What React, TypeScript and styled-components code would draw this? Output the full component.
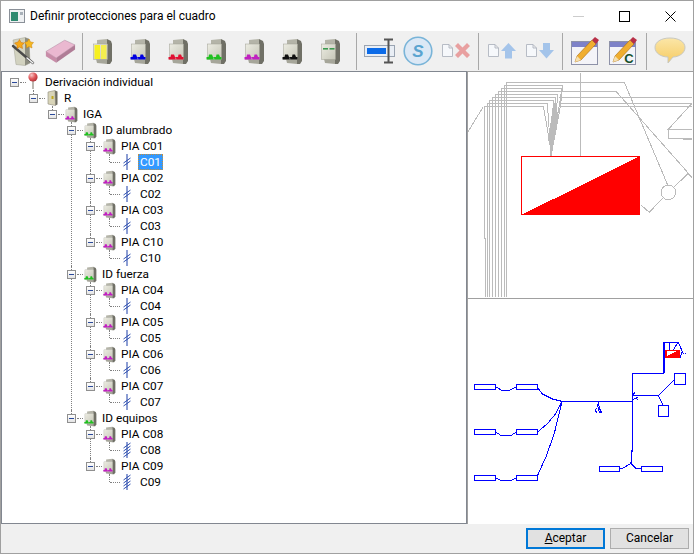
import React, { useId } from 'react';
import styled, { createGlobalStyle } from 'styled-components';

const GlobalStyle = createGlobalStyle`
  html, body {
    margin: 0;
    padding: 0;
    background: #f0f0f0;
  }
  * {
    box-sizing: border-box;
  }
`

const UI_FONT = `Roboto, "Liberation Sans", sans-serif`

const Window = styled.div`
  width: 694px;
  height: 554px;
  display: flex;
  flex-direction: column;
  border: 1px solid #a0a0a0;
  background: #f0f0f0;
  font-family: ${UI_FONT};
  font-size: 11.8px;
  color: #000;
  overflow: hidden;
`

const TitleBar = styled.div`
  height: 30px;
  flex: none;
  display: flex;
  align-items: center;
  background: #fff;
  padding-left: 8px;
`

const TitleText = styled.span`
  margin-left: 5px;
  flex: 1;
  font-size: 12px;
  line-height: 17px;
  padding-top: 1px;
`

const WinButton = styled.div`
  width: 46px;
  height: 30px;
  display: flex;
  align-items: center;
  justify-content: center;
`

const Toolbar = styled.div`
  height: 40px;
  flex: none;
  display: flex;
  align-items: center;
  padding-left: 2px;
  background: #f0f0f0;
`

const ToolButton = styled.div`
  width: 38px;
  height: 38px;
  flex: none;
  display: flex;
  align-items: center;
  justify-content: center;
`

const ToolSep = styled.div<{ $before: number; $after: number }>`
  width: 1px;
  height: 37px;
  flex: none;
  background: #a8a8a8;
  margin: 0 ${p => p.$after}px 0 ${p => p.$before}px;
`

const Main = styled.div`
  flex: 1;
  min-height: 0;
  display: flex;
`

const TreePanel = styled.div`
  width: 466px;
  flex: none;
  background: #fff;
  border: 1px solid #828790;
  padding-top: 2px;
  overflow: hidden;
`

const SidePanel = styled.div`
  flex: 1;
  display: flex;
  flex-direction: column;
  min-width: 0;
`

const Preview = styled.div<{ $h: number }>`
  height: ${p => p.$h}px;
  flex: none;
  background: #fff;
  border-top: 1px solid #a0a0a0;
  border-left: 1px solid #a0a0a0;
  overflow: hidden;

  svg {
    display: block;
  }
`

const Footer = styled.div`
  height: 29px;
  flex: none;
  display: flex;
  align-items: center;
  justify-content: flex-end;
  gap: 5px;
  padding: 0 4px 1px 0;
  background: #f0f0f0;
`

const DialogButton = styled.button<{ $primary?: boolean }>`
  height: 21px;
  width: 79px;
  padding: 0;
  font: inherit;
  font-size: 12px;
  color: #000;
  background: #e1e1e1;
  border: ${p => (p.$primary ? '2px solid #0078d7' : '1px solid #adadad')};

  u {
    text-decoration: underline;
  }
`

const NodeBox = styled.div<{ $guide: number; $last: boolean; $root: boolean }>`
  position: relative;

  &::before {
    content: '';
    display: ${p => (p.$root ? 'none' : 'block')};
    position: absolute;
    left: ${p => p.$guide}px;
    top: 0;
    height: ${p => (p.$last ? '8px' : '100%')};
    border-left: 1px dotted #808080;
  }
`

const Row = styled.div<{ $level: number }>`
  position: relative;
  height: 16px;
  display: flex;
  align-items: center;
  padding-left: ${p => 8 + p.$level * 19}px;
  white-space: nowrap;
`

const Expander = styled.div`
  width: 9px;
  height: 9px;
  flex: none;
  display: flex;
  align-items: center;
  justify-content: center;
  border: 1px solid #8f8f8f;
  background: linear-gradient(#ffffff, #e4e4e4);

  &::after {
    content: '';
    width: 5px;
    height: 1px;
    background: #2b4a9b;
  }
`

const LeafSlot = styled.div`
  width: 9px;
  height: 1px;
  flex: none;
`

const Dash = styled.div<{ $leaf: boolean }>`
  flex: none;
  width: ${p => (p.$leaf ? 10 : 6)}px;
  margin-left: ${p => (p.$leaf ? -4 : 1)}px;
  border-top: 1px dotted #808080;
`

const IconSlot = styled.div`
  width: 14px;
  height: 16px;
  flex: none;
  display: flex;
  align-items: center;
  justify-content: center;
`

const Label = styled.span<{ $selected?: boolean; $leaf: boolean }>`
  margin-left: ${p => (p.$leaf ? 4 : 3)}px;
  padding: 0 2px;
  line-height: 17px;
  height: 16px;
  outline: ${p => (p.$selected ? '1px dotted #c58f3c' : 'none')};
  outline-offset: -1px;
  background: ${p => (p.$selected ? '#3399ff' : 'transparent')};
  color: ${p => (p.$selected ? '#fff' : '#000')};
`

type BreakerProps = { feet?: string; w?: number; h?: number; variant?: 'feet' | 'yellow' | 'green' };

const Breaker = ({ feet = '#0000e0', w = 21, h = 27, variant = 'feet' }: BreakerProps) => {
  const id = useId();
  return (
    <svg width={w} height={h} viewBox="0 0 21 27">
      <defs>
        <linearGradient id={id} x1="0" y1="0" x2="1" y2="1">
          <stop offset="0" stopColor="#ecece2" />
          <stop offset="1" stopColor="#c6c6b8" />
        </linearGradient>
      </defs>
      <path d="M5 2 L15 1 L15 6 L5 6 Z" fill="#b4b4a8" />
      <path d="M4 21 H15 V26 L5 25 Z" fill="#a6a69a" />
      <path d="M15 1 L19 3 L20 6 V23 L18 26 L15 26 Z" fill="#707066" />
      <rect x="1.5" y="6" width="14" height="15.5" fill={`url(#${id})`} stroke="#a0a094" strokeWidth="0.5" />
      {variant === 'feet' && (
        <>
          <path d="M3 16.5 H6 L7 19 H10 L10.5 16.5 H13 L14 19 H15.5 V21.5 H0.5 V19 H2.5 Z" fill={feet} />
          <path d="M7.5 19.5 L8 21.5" stroke="#fff" strokeOpacity="0.6" strokeWidth="0.7" />
        </>
      )}
      {variant === 'yellow' && (
        <>
          <rect x="2.5" y="7" width="5.5" height="14" fill="#f7f020" />
          <rect x="9" y="7" width="5.5" height="14" fill="#f4ee50" />
        </>
      )}
      {variant === 'green' && (
        <>
          <rect x="3" y="10" width="5" height="1.6" fill="#3c9a50" />
          <rect x="9.5" y="10" width="5" height="1.6" fill="#3c9a50" />
        </>
      )}
    </svg>
  );
};

const TreeBreaker = ({ color }: { color: string }) => <Breaker w={13} h={17} feet={color} />;

const PanelIcon = () => (
  <svg width="11" height="16" viewBox="0 0 11 16">
    <path d="M1 2 L8 0.5 L8.5 15.5 L1 14 Z" fill="#d8d4b8" stroke="#8e8c7c" strokeWidth="0.6" />
    <path d="M8 0.5 L10.5 1.5 L10.5 14.5 L8.5 15.5 Z" fill="#6e6c60" />
    <rect x="4.5" y="6" width="2" height="3" fill="#c0a820" />
  </svg>
);

const PinIcon = () => (
  <svg width="14" height="18" viewBox="0 0 14 18" style={{ marginTop: -2 }}>
    <defs>
      <radialGradient id="pinBall" cx="0.35" cy="0.3" r="0.8">
        <stop offset="0" stopColor="#f8c8c8" />
        <stop offset="0.5" stopColor="#e0585c" />
        <stop offset="1" stopColor="#a82a30" />
      </radialGradient>
    </defs>
    <path d="M7 8 V17" stroke="#a09a90" strokeWidth="1.4" />
    <circle cx="7" cy="5" r="4.6" fill="url(#pinBall)" />
  </svg>
);

const CableIcon = ({ slashes }: { slashes: number }) => {
  const start = 8 - (slashes - 1) * 1.5;
  return (
    <svg width="10" height="16" viewBox="0 0 10 16">
      <path d="M5 0 V16" stroke="#1c3fa8" strokeWidth="1" />
      {Array.from({ length: slashes }).map((_, i) => {
        const y = start + i * 3;
        return <path key={i} d={`M1.5 ${y + 2.5} L8.5 ${y - 2.5}`} stroke="#1c3fa8" strokeWidth="0.9" />;
      })}
    </svg>
  );
};

const WandIcon = () => (
  <svg width="26" height="29" viewBox="0 0 26 29">
    <path d="M4 3 L16 0.5 L20 2 L21 26 L16 28.5 L7 27.5 Z" fill="#d2d2c0" stroke="#a0a092" strokeWidth="0.5" />
    <path d="M16 0.5 L20 2 L21 26 L16 28.5 Z" fill="#8c8c80" />
    <path d="M4 9 L24 26" stroke="#4a4a4a" strokeWidth="2.4" strokeLinecap="round" />
    <path d="M18 21 L24 26" stroke="#f4f4f4" strokeWidth="1.5" strokeLinecap="round" />
    <path d="M9 5 L10.5 2.5 L12 5.5 L15 6 L13 8.5 L13.5 11.5 L10.5 10 L8 11.5 L8 8.5 L5.5 6 Z" fill="#f7a818" stroke="#c9700c" strokeWidth="0.5" />
    <path d="M18.5 4.5 L20 2 L21.5 5 L24.5 5.5 L22.5 8 L23 11 L20 9.5 L17.5 11 L17.5 8 L15.5 5.5 Z" fill="#f5b820" stroke="#c9800c" strokeWidth="0.5" />
  </svg>
);

const EraserIcon = () => (
  <svg width="32" height="25" viewBox="0 0 34 26">
    <path d="M2 13 L22 1 L33 6 L13 20 Z" fill="#eab8d0" stroke="#a8809a" strokeWidth="0.5" />
    <path d="M2 13 L13 20 L13 25 L2 18 Z" fill="#c88ca8" />
    <path d="M13 20 L33 6 L33 11 L13 25 Z" fill="#b07c96" />
  </svg>
);

const TextFieldIcon = () => (
  <svg width="32" height="26" viewBox="0 0 32 26">
    <rect x="0.5" y="7.5" width="30" height="11" fill="#e9eef5" stroke="#9aa4b2" />
    <rect x="3" y="10" width="19" height="6" fill="#0c6be8" />
    <path d="M20 1.5 H29 M24.5 1.5 V24.5 M20 24.5 H29" stroke="#555" strokeWidth="2" fill="none" />
  </svg>
);

const SpellIcon = () => (
  <svg width="30" height="30" viewBox="0 0 30 30">
    <circle cx="15" cy="15" r="13.8" fill="#dce8f5" stroke="#79b4d8" strokeWidth="1.6" />
    <text x="15" y="21" textAnchor="middle" fontFamily="Liberation Sans, sans-serif" fontSize="17" fontWeight="700" fontStyle="italic" fill="#5aa4d0">S</text>
  </svg>
);

const PageGlyph = () => (
  <path d="M1.5 1.5 H8 L11.5 5 V13.5 H1.5 Z M8 1.5 V5 H11.5" fill="#f6f8fb" stroke="#b0b6c0" strokeWidth="0.9" />
);

const DeleteIcon = () => (
  <svg width="30" height="16" viewBox="0 0 30 16">
    <PageGlyph />
    <path d="M15 2 L17 0 L21.5 4.5 L26 0 L29 3 L24.5 7.5 L29 12 L26 15 L21.5 10.5 L17 15 L14 12 L18.5 7.5 L14 3 Z" fill="#e8a0a0" />
  </svg>
);

const MoveIcon = ({ down }: { down?: boolean }) => (
  <svg width="30" height="16" viewBox="0 0 30 16">
    <PageGlyph />
    <path
      d={down ? 'M18 0 H25 V7 H29 L21.5 15.5 L14 7 H18 Z' : 'M21.5 0 L29 8 H25 V15.5 H18 V8 H14 Z'}
      fill="#a4c4ea"
    />
  </svg>
);

const EditIcon = ({ withC }: { withC?: boolean }) => (
  <svg width="30" height="30" viewBox="0 0 30 30">
    <rect x="1.5" y="5.5" width="26" height="23" fill="#f4f4f8" stroke="#8e92a8" />
    <rect x="2" y="6" width="25" height="5" fill="#7e82c8" />
    <path d="M5 26 L7 20 L22 4 L26 8 L11 24 Z" fill="#f0ae30" stroke="#a86c10" strokeWidth="0.6" />
    <path d="M22 4 L25 1 L29 4 L26 8 Z" fill="#b83048" />
    <path d="M5 26 L7 20 L11 24 Z" fill="#f5e0b0" />
    {withC && (
      <text x="21" y="27" textAnchor="middle" fontFamily="Liberation Sans, sans-serif" fontSize="13" fontWeight="700" fill="#14502c">C</text>
    )}
  </svg>
);

const BubbleIcon = () => (
  <svg width="32" height="28" viewBox="0 0 32 28">
    <defs>
      <linearGradient id="bubbleFill" x1="0" y1="0" x2="0" y2="1">
        <stop offset="0" stopColor="#fbe6a8" />
        <stop offset="1" stopColor="#f6cb62" />
      </linearGradient>
    </defs>
    <path d="M16 1 C25 1 31 5 31 10.5 C31 16 25 20 19 20 L14 26 L14 20 C7 20 1 16 1 10.5 C1 5 7 1 16 1 Z" fill="url(#bubbleFill)" stroke="#c8c8c0" />
  </svg>
);

const AppIcon = () => (
  <svg width="16" height="14" viewBox="0 0 16 14">
    <rect x="0.5" y="0.5" width="15" height="13" fill="#eef0f2" stroke="#8a9098" />
    <rect x="2" y="3" width="7" height="9" fill="#2f8a70" />
    <rect x="11" y="3" width="3" height="3" fill="#a8b0b8" />
  </svg>
);

const TopSketch = () => (
  <svg width="226" height="226" viewBox="6 6 678 678" shapeRendering="crispEdges">
    <g fill="none" stroke="#bbbbbb" strokeWidth="3">
      <path d="M122 680 V37 H475 L605 345" />
      <path d="M114 680 V46 H290 L283 110 L255 258" />
      <path d="M106 680 V55 H288 L255 258" />
      <path d="M96 680 V64 H450 L678 322" />
      <path d="M87 680 V73 H276 L255 258" />
      <path d="M78 680 V82 H270 L255 258" />
      <path d="M69 680 V91 H262 L255 258" />
      <path d="M63 680 V100 H244 L255 258" />
      <path d="M58 680 V505 H54 V109 H232 L250 210" />
      <path d="M280 82 H678 M280 100 H678 M280 109 H678" />
      <path d="M52 110 L6 185" />
      <path d="M343 8 V258" />
      <path d="M678 100 L607 178 H678 M607 178 V205 H678" />
      <path d="M650 208 H678" strokeWidth="5" />
      <circle cx="607" cy="367" r="22" />
      <path d="M623 352 L665 312 L678 322" />
      <path d="M590 384 L550 427 L525 405" />
    </g>
    <path d="M268 90 L275 130 L266 180 L256 250 L246 205 L258 130 Z" fill="#bbbbbb" />
    <rect x="167" y="259" width="354" height="174" fill="#fff" stroke="#ff0000" strokeWidth="3" />
    <path d="M166 435 L522 258 V435 Z" fill="#ff0000" />
  </svg>
);

const WIRE_BOXES = [
  [25, 253, 64, 15], [151, 253, 64, 15],
  [25, 388, 64, 15], [151, 388, 64, 15],
  [25, 526, 64, 15], [151, 526, 64, 15],
  [400, 499, 61, 15], [526, 499, 64, 15],
  [625, 220, 33, 33], [577, 316, 31, 33],
];

const BottomSketch = () => (
  <svg width="226" height="226" viewBox="6 -3 678 678" shapeRendering="crispEdges">
    <g fill="none" stroke="#0000ff" strokeWidth="3">
      {WIRE_BOXES.map(([x, y, w, h]) => (
        <rect key={`${x}-${y}`} x={x} y={y} width={w} height={h} />
      ))}
      <path d="M89 260 L105 270 H133 L151 260" />
      <path d="M89 396 L103 405 H137 L151 396" />
      <path d="M89 533 L103 540 H137 L151 533" />
      <path d="M215 264 L230 282 L260 297 L288 304 H499" strokeWidth="3.5" />
      <path d="M215 396 L245 370 L270 340 L288 304" />
      <path d="M215 526 L240 470 L265 400 L288 304" />
      <path d="M499 304 V220 H593" strokeWidth="3.5" />
      <path d="M499 304 V440 L495 490" strokeWidth="3.5" />
      <path d="M594 220 V127" strokeWidth="5" />
      <path d="M594 127 H637 L649 155 L642 173" />
      <path d="M612 127 L610 150 M634 130 L622 150" />
      <path d="M650 160 H662" strokeDasharray="3 3" />
      <path d="M499 300 V287 H577 L625 240 M577 287 L592 316" strokeWidth="3" />
      <path d="M500 285 L507 277 M500 300 L517 290 M511 296 L516 298" />
      <path d="M397 305 L400 325 L408 340 M395 312 L397 330 L404 340 M393 325 L387 330 L393 338" />
      <path d="M495 490 L470 505 H461 M495 490 L510 505 H526" />
    </g>
    <rect x="598" y="150" width="45" height="23" fill="#ff0000" />
    <path d="M602 169 L634 153 H602 Z" fill="#fff" />
  </svg>
);

type TreeItem = {
  label: string;
  icon: React.ReactNode;
  selected?: boolean;
  children?: TreeItem[];
};

const pia = (n: string, slashes: number, selected?: boolean): TreeItem => ({
  label: `PIA ${n}`,
  icon: <TreeBreaker color="#c020c0" />,
  children: [{ label: n, icon: <CableIcon slashes={slashes} />, selected }],
});

const TREE: TreeItem = {
  label: 'Derivación individual',
  icon: <PinIcon />,
  children: [{
    label: 'R',
    icon: <PanelIcon />,
    children: [{
      label: 'IGA',
      icon: <TreeBreaker color="#c020c0" />,
      children: [
        {
          label: 'ID alumbrado',
          icon: <TreeBreaker color="#20c020" />,
          children: [pia('C01', 2, true), pia('C02', 2), pia('C03', 2), pia('C10', 2)],
        },
        {
          label: 'ID fuerza',
          icon: <TreeBreaker color="#20c020" />,
          children: [pia('C04', 2), pia('C05', 2), pia('C06', 2), pia('C07', 2)],
        },
        {
          label: 'ID equipos',
          icon: <TreeBreaker color="#20c020" />,
          children: [pia('C08', 4), pia('C09', 4)],
        },
      ],
    }],
  }],
};

const TreeNode = ({ item, level, last }: { item: TreeItem; level: number; last: boolean }) => {
  const leaf = !item.children;
  return (
    <NodeBox $guide={8 + level * 19 + 4} $last={last} $root={level === 0}>
      <Row $level={level}>
        {leaf ? <LeafSlot /> : <Expander />}
        <Dash $leaf={leaf} />
        <IconSlot>{item.icon}</IconSlot>
        <Label $selected={item.selected} $leaf={leaf}>{item.label}</Label>
      </Row>
      {item.children?.map((child, i) => (
        <TreeNode key={child.label} item={child} level={level + 1} last={i === item.children!.length - 1} />
      ))}
    </NodeBox>
  );
};

function App() {
  return (
    <Window>
      <GlobalStyle />
      <TitleBar>
        <AppIcon />
        <TitleText>Definir protecciones para el cuadro</TitleText>
        <WinButton>
          <svg width="11" height="11" viewBox="0 0 11 11"><path d="M0 5.5 H11" stroke="#cccccc" /></svg>
        </WinButton>
        <WinButton>
          <svg width="11" height="11" viewBox="0 0 11 11"><rect x="0.5" y="0.5" width="10" height="10" fill="none" stroke="#000" /></svg>
        </WinButton>
        <WinButton>
          <svg width="11" height="11" viewBox="0 0 11 11"><path d="M0.5 0.5 L10.5 10.5 M10.5 0.5 L0.5 10.5" stroke="#000" /></svg>
        </WinButton>
      </TitleBar>
      <Toolbar>
        <ToolButton><WandIcon /></ToolButton>
        <ToolButton><EraserIcon /></ToolButton>
        <ToolSep $before={3} $after={0} />
        <ToolButton><Breaker variant="yellow" /></ToolButton>
        <ToolButton><Breaker feet="#0000e0" /></ToolButton>
        <ToolButton><Breaker feet="#e01030" /></ToolButton>
        <ToolButton><Breaker feet="#20c020" /></ToolButton>
        <ToolButton><Breaker feet="#c020c0" /></ToolButton>
        <ToolButton><Breaker feet="#101010" /></ToolButton>
        <ToolButton><Breaker variant="green" /></ToolButton>
        <ToolSep $before={7} $after={4} />
        <ToolButton><TextFieldIcon /></ToolButton>
        <ToolButton><SpellIcon /></ToolButton>
        <ToolButton><DeleteIcon /></ToolButton>
        <ToolSep $before={3} $after={4} />
        <ToolButton><MoveIcon /></ToolButton>
        <ToolButton><MoveIcon down /></ToolButton>
        <ToolSep $before={3} $after={3} />
        <ToolButton><EditIcon /></ToolButton>
        <ToolButton><EditIcon withC /></ToolButton>
        <ToolSep $before={4} $after={4} />
        <ToolButton><BubbleIcon /></ToolButton>
      </Toolbar>
      <Main>
        <TreePanel>
          <TreeNode item={TREE} level={0} last />
        </TreePanel>
        <SidePanel>
          <Preview $h={227}><TopSketch /></Preview>
          <Preview $h={226}><BottomSketch /></Preview>
        </SidePanel>
      </Main>
      <Footer>
        <DialogButton $primary><u>A</u>ceptar</DialogButton>
        <DialogButton>Cancelar</DialogButton>
      </Footer>
    </Window>
  );
}

export default App;
